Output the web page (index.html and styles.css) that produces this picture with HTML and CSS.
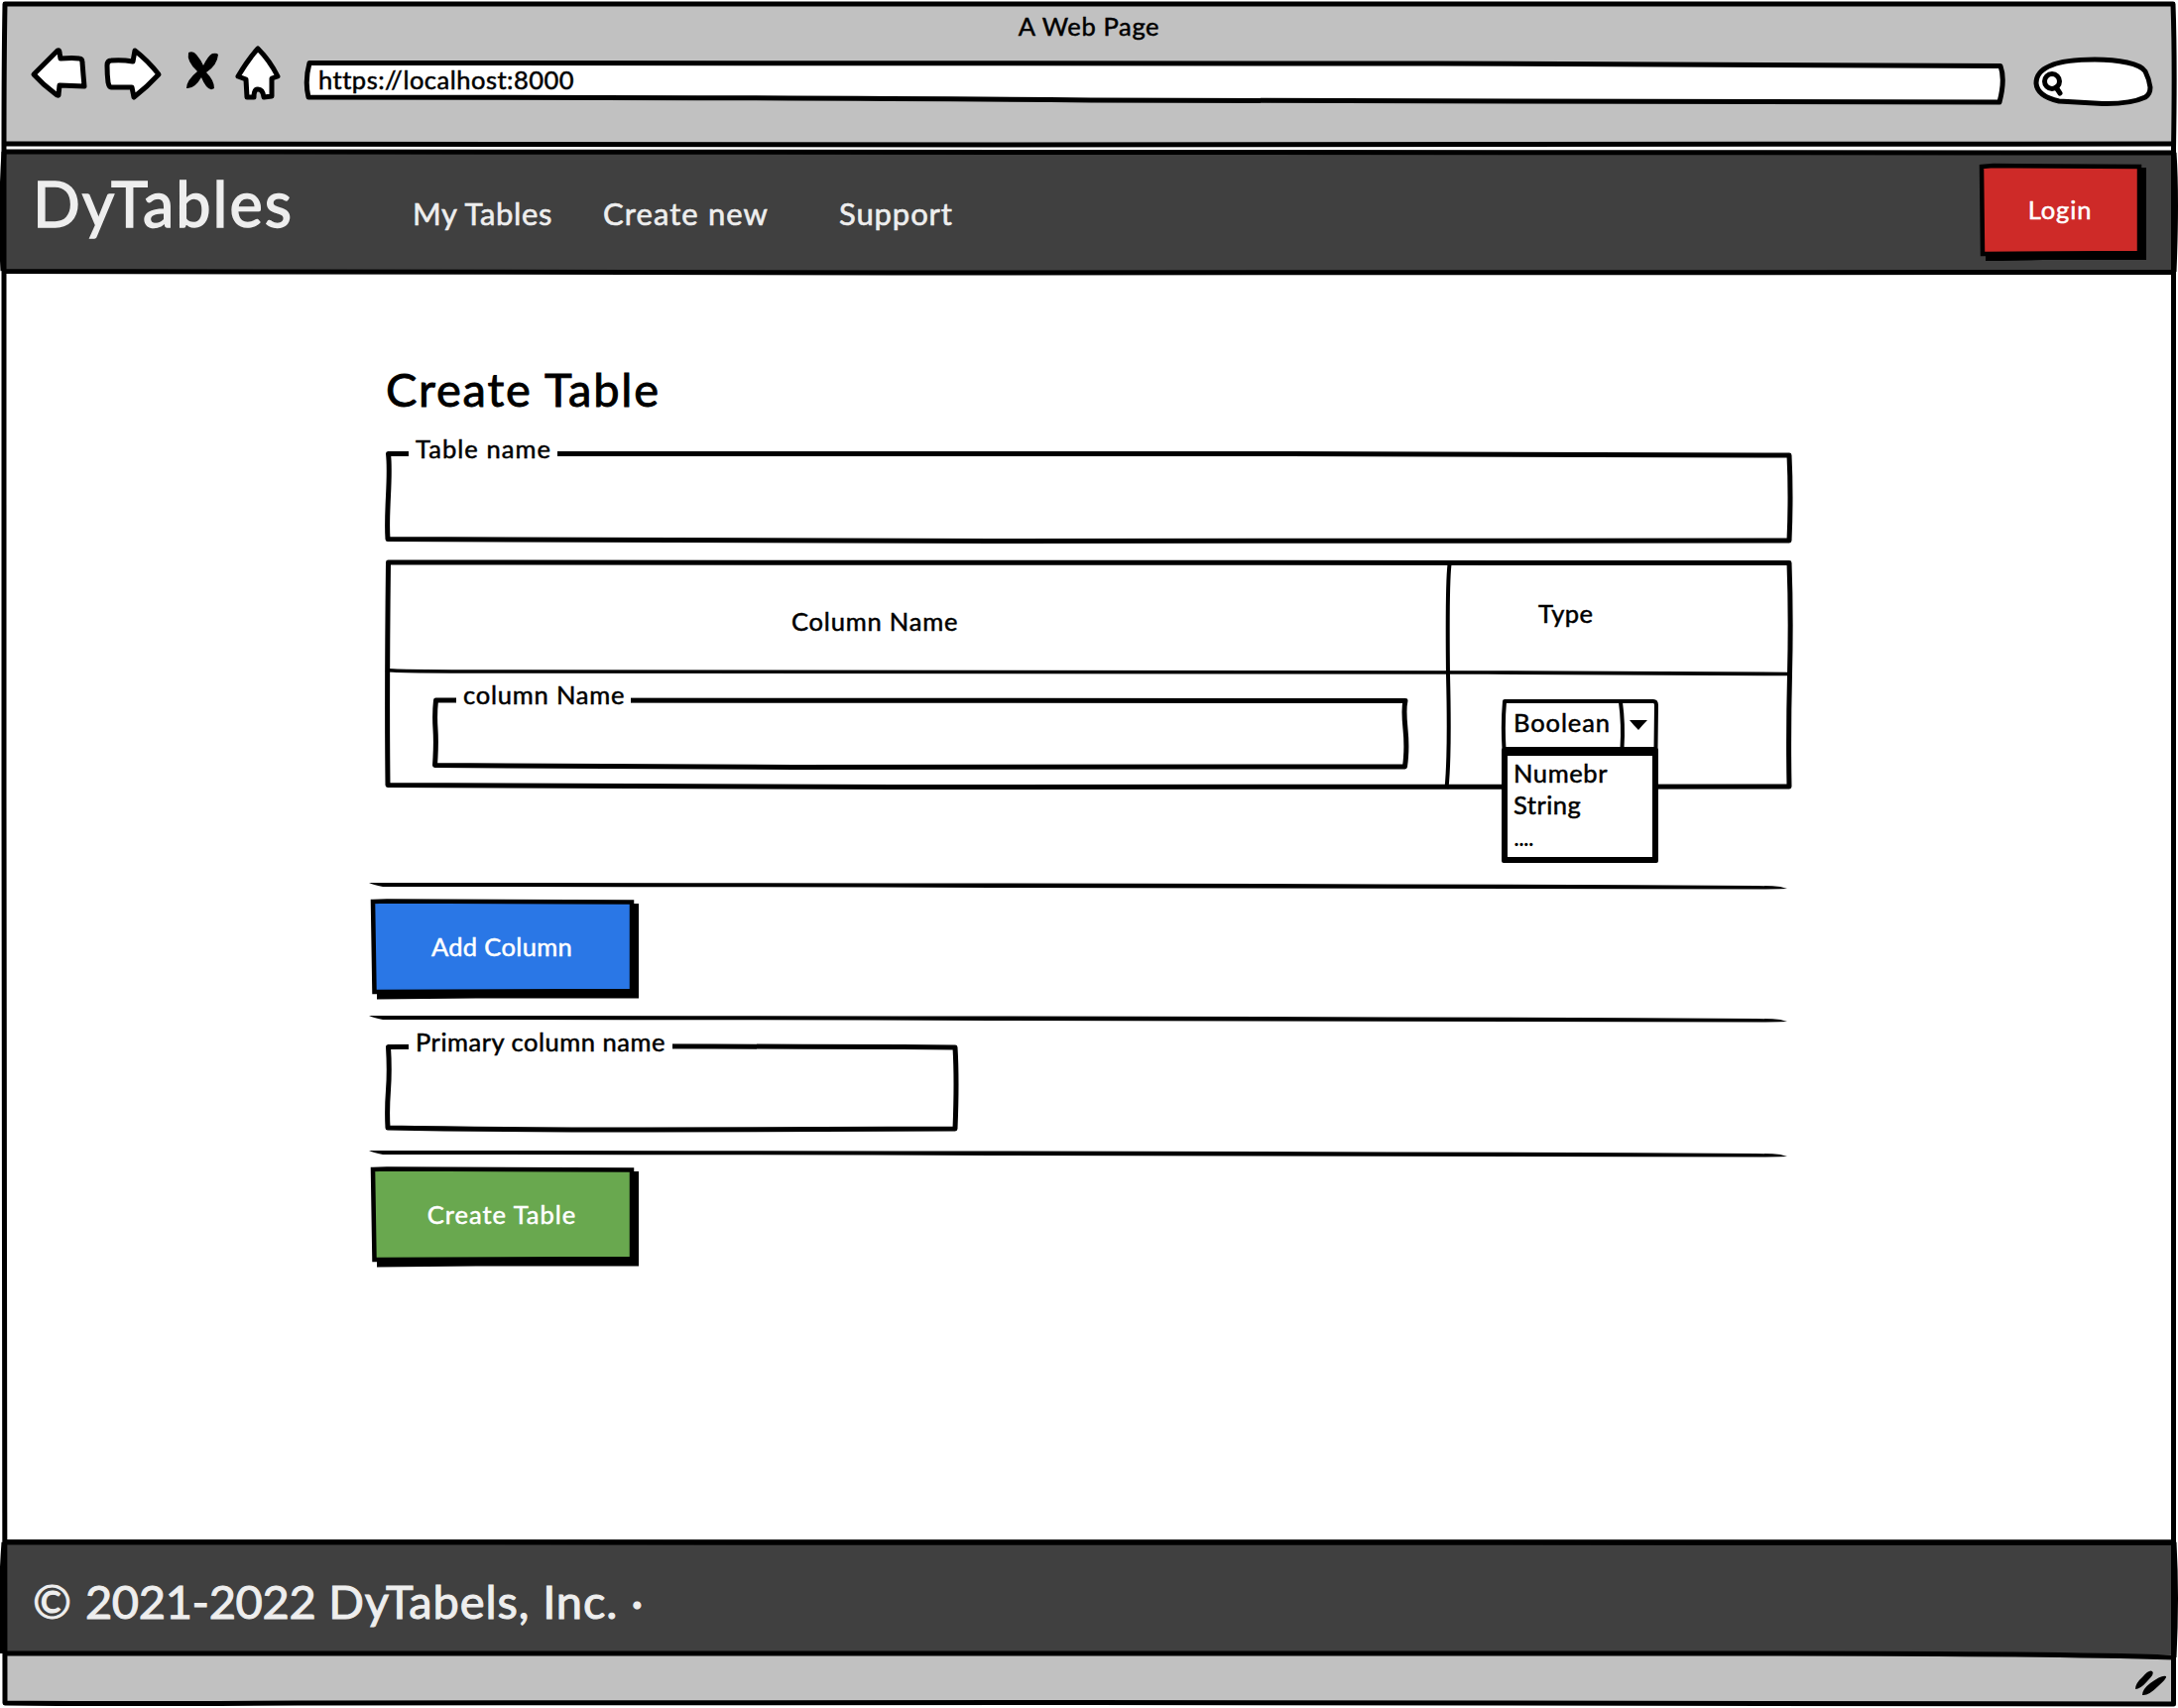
FILE: index.html
```
<!DOCTYPE html>
<html lang="en">
<head>
<meta charset="utf-8">
<title>A Web Page</title>
<link rel="stylesheet" href="styles.css">
</head>
<body>
<div class="window">
  <header class="chrome">
    <div class="chrome-title"><span class="t-title">A Web Page</span></div>
    <div class="toolbar">
      <svg class="tool tool-back" viewBox="28 52 76 60"><path d="M34 75L58 51Q60 50 60 53L61 59Q74 58 80 59Q83 59 83 63Q84 76 85 87L60 86L59 96Q58 97 55 94Q43 85 34 75Z"/></svg>
      <svg class="tool tool-forward" viewBox="104 52 80 60"><path d="M108 66Q108 61 112 61Q123 60 134 62L136 51Q149 61 160 75Q149 87 135 98L133 88L112 88Q110 88 109 83Q108 75 108 66Z"/></svg>
      <svg class="tool tool-stop" viewBox="184 52 52 60"><path class="solid" d="M190 53Q195 51 198 55Q203 61 205 66Q210 56 214 54Q219 53 220 55Q219 66 208 73Q216 81 216 89Q212 92 208 87Q205 83 203 78Q196 90 188 89Q188 81 199 72Q188 62 190 53Z"/></svg>
      <svg class="tool tool-home" viewBox="236 52 68 60"><path d="M260 49Q250 60 240 77L248 80L249 98L256 98Q256 90 260 90Q265 90 266 98L274 97L274 79L280 77Q272 61 260 49Z"/></svg>
      <div class="url">
        <svg class="sketch" viewBox="304 52 1720 60"><path class="paper" d="M312 63.5Q1000 62 1450 64Q1750 66 2017 66.5Q2022 80 2016 103Q1500 103 1100 101Q800 98 311 98Q307 82 312 63.5Z"/></svg>
        <span class="t-url">https://localhost:8000</span>
      </div>
      <svg class="tool tool-search" viewBox="2024 52 172 60"><path d="M2053 84C2053 66 2078 60 2112 60C2136 60 2158 64 2163 72Q2167 80 2168 88Q2168 95 2163 98Q2148 105 2120 104.500Q2095 103 2076 102Q2054 97 2053 84Z"/><circle cx="2069" cy="82" r="7.500"/><path d="M2073 88L2077 94"/></svg>
    </div>
  </header>
  <nav class="nav">
    <span class="brand t-brand">DyTables</span>
    <span class="link link-tables">My Tables</span>
    <span class="link link-new">Create new</span>
    <span class="link link-support">Support</span>
    <button class="btn btn-login">
      <svg class="sketch" viewBox="1996 165 168 98"><path class="shadow" d="M2002 169H2164V262L2060 262Q2030 263 2002 263Z"/><path class="fill-red" d="M1998 168L2010 167L2157 168L2157 255L1999 256Z"/></svg>
      <span class="t-login">Login</span>
    </button>
    <svg class="sketch" viewBox="0 150 2196 127"><path class="line" d="M3 153Q1100 152 2192 154M2192 154Q2195 200 2192 274M2192 274.500Q1500 275 900 275Q400 274 3 273.500M3 273Q0 220 4 153"/></svg>
  </nav>
  <main class="page">
    <h1><span class="t-h1">Create Table</span></h1>
    <div class="field field-table">
      <svg class="sketch" viewBox="389 455 1418 92"><path class="line" d="M391.500 457.500Q900 457 1300 457.500T1804 459Q1806 500 1804 545Q1300 546 1000 545.500Q700 545 391 543.500Q390 530 391.500 500T391.500 457.500Z"/></svg>
      <label class="label-table"><span class="t-tname">Table name</span></label>
    </div>
    <div class="table">
      <svg class="sketch" viewBox="389 564 1418 231"><path class="line" d="M391.500 567Q1000 566.500 1804 567.500Q1806 620 1804.500 680T1804 793Q1200 794 900 793.500T391 791.500Q390 700 391.500 567Z"/><path class="line thin" d="M1461.500 569Q1459 590 1460 680Q1462 760 1458.500 795"/><path class="row-line" d="M389 675.500Q400 677 500 677L1500 678L1807 679.500"/></svg>
      <div class="cell head-name"><span class="t-cname">Column Name</span></div>
      <div class="cell head-type"><span class="t-type">Type</span></div>
      <div class="cell cell-name">
        <div class="field field-column">
          <svg class="sketch" viewBox="437 703 982 72"><path class="line" d="M439.500 706Q900 705 1417 706.500Q1415 715 1417 735T1416.500 773Q1000 774 800 773.500T438.500 771.500Q440 750 439 735T439.500 706Z"/></svg>
          <label class="label-column"><span class="t-lcol">column Name</span></label>
        </div>
      </div>
      <div class="cell cell-type">
        <div class="combo">
          <svg class="sketch" viewBox="1514 705 158 50"><path class="paper thin" d="M1517 707H1667Q1670 707 1670 711L1669.500 755H1516.500Q1515 730 1517 707Z"/><path class="line thin" d="M1634 708Q1637 730 1635.500 754"/><path class="solid" d="M1643 726H1661Q1656 731 1652 736Q1647 731 1643 726Z"/></svg>
          <span class="t-bool">Boolean</span>
          <ul class="options">
            <li><span class="t-num">Numebr</span></li>
            <li><span class="t-str">String</span></li>
            <li><span class="t-dots">....</span></li>
          </ul>
        </div>
      </div>
    </div>
    <svg class="rule rule-1" viewBox="372 890 1430 8"><path d="M372 891Q376 893 386 895Q700 895 1000 896L1780 897.500Q1796 897 1802 897L1795 895Q1785 894 1770 894Q1400 892 1000 891.500Q600 891 372 891Z"/></svg>
    <button class="btn btn-add">
      <svg class="sketch" viewBox="374 907 270 100"><path class="shadow" d="M380 911H644V1006.500H480L380 1007.500Z"/><path class="fill-blue" d="M376 909L390 908.500L637 909.500L637 999L377.500 1000Z"/></svg>
      <span class="t-add">Add Column</span>
    </button>
    <svg class="rule rule-2" viewBox="372 890 1430 8"><path d="M372 891Q376 893 386 895Q700 895 1000 896L1780 897.500Q1796 897 1802 897L1795 895Q1785 894 1770 894Q1400 892 1000 891.500Q600 891 372 891Z"/></svg>
    <div class="field field-primary">
      <svg class="sketch" viewBox="389 1054 577 87"><path class="line" d="M391.500 1056.500Q600 1055 963 1057Q965 1090 963 1139Q800 1140 650 1140T391 1138Q390 1120 391.500 1100T391.500 1056.500Z"/></svg>
      <label class="label-primary"><span class="t-lprim">Primary column name</span></label>
    </div>
    <svg class="rule rule-3" viewBox="372 890 1430 8"><path d="M372 891Q376 893 386 895Q700 895 1000 896L1780 897.500Q1796 897 1802 897L1795 895Q1785 894 1770 894Q1400 892 1000 891.500Q600 891 372 891Z"/></svg>
    <button class="btn btn-create">
      <svg class="sketch" viewBox="374 907 270 100"><path class="shadow" d="M380 911H644V1006.500H480L380 1007.500Z"/><path class="fill-green" d="M376 909L390 908.500L637 909.500L637 999L377.500 1000Z"/></svg>
      <span class="t-create">Create Table</span>
    </button>
  </main>
  <footer class="footer"><span class="t-foot">© <span class="years">2021-2022</span> DyTabels, Inc. ·</span>
    <svg class="sketch" viewBox="0 1552 2196 116"><path class="line" d="M3 1555Q1100 1554 2192 1555.500M2192 1555Q2195 1610 2192 1671M2192 1671Q2050 1667 1800 1667Q900 1669 3 1667M2 1667Q0 1610 4 1555"/></svg>
  </footer>
  <div class="status">
    <svg class="grip" viewBox="2148 1680 40 32"><path d="M2153 1703Q2153 1697 2160 1691Q2167 1683 2170 1685Q2173 1687 2165 1695Q2158 1703 2153 1703ZM2160 1709Q2160 1703 2168 1697Q2180 1688 2184 1690Q2185 1692 2176 1700Q2166 1710 2160 1709Z"/></svg>
  </div>
  <svg class="sketch frame" viewBox="0 0 2196 1722"><path class="line" d="M5 4H2191Q2193 60 2191.500 150V1718Q1600 1717 1100 1716.500Q500 1716 300 1717T5 1717Q3 1200 4 800T4 150Q4 60 5 4Z"/><path class="line" d="M5 145Q400 147 1000 146T2191 145"/></svg>
</div>
</body>
</html>
```
FILE: styles.css
```
* { box-sizing: border-box; }
body {
  margin: 0;
  background: #fff;
  color: #000;
  font: 25.5px/30px Lato, "Open Sans", sans-serif;
  -webkit-text-stroke: 0.5px currentColor;
}
span, li, label { white-space: nowrap; }
svg { overflow: visible; display: block; }
.window {
  position: relative;
  width: 2196px;
  height: 1722px;
  display: flex;
  flex-direction: column;
}
.sketch { position: absolute; inset: 0; width: 100%; height: 100%; pointer-events: none; }
.sketch ~ span, .sketch ~ label { position: relative; }
.line { fill: none; stroke: #000; stroke-width: 5; stroke-linejoin: round; }
.paper { fill: #fff; stroke: #000; stroke-width: 5; stroke-linejoin: round; }
.thin { stroke-width: 4; }
.row-line { fill: none; stroke: #000; stroke-width: 3.6; }
.solid { fill: #000; stroke: none; }
.shadow { fill: #000; }

.chrome { height: 148px; margin: 3px 4px 0; background: linear-gradient(#c1c1c1 142px, #fff 142px); }
.chrome-title { height: 49px; line-height: 46px; text-align: center; }
.toolbar { display: flex; height: 60px; margin-left: 24px; margin-right: -4px; }
.tool { height: 60px; flex: none; fill: #fff; stroke: #000; stroke-width: 5; stroke-linejoin: round; stroke-linecap: round; }
.tool .solid { fill: #000; stroke: none; }
.tool-back { width: 76px; }
.tool-forward { width: 80px; }
.tool-stop { width: 52px; }
.tool-home { width: 68px; }
.tool-search { width: 172px; }
.url { position: relative; flex: 1; padding: 13px 0 0 17px; }

.nav { position: relative; height: 127px; margin-top: -1px; background: linear-gradient(#404040, #404040) 4px 3px / 2188px 122px no-repeat; color: #eee; display: flex; flex: none; }
.nav > .sketch { z-index: 1; }
.brand { width: 416px; padding-left: 33px; font-size: 63px; line-height: 70px; margin-top: 20px; -webkit-text-stroke-width: 1.4px; }
.link { font-size: 31px; line-height: 40px; margin-top: 45px; -webkit-text-stroke-width: 0.6px; }
.link-tables { width: 192px; }
.link-new { width: 238px; }

.btn { position: relative; display: block; border: 0; background: none; font: inherit; color: #fff; text-align: center; -webkit-text-stroke: inherit; }
.fill-red, .fill-blue, .fill-green { stroke: #000; stroke-width: 4.5; }
.fill-red { fill: #ce2a28; }
.fill-blue { fill: #2a77e6; }
.fill-green { fill: #69a84f; }
.btn-login { width: 168px; height: 98px; margin: 15px 32px 0 auto; padding: 0 6px 6px 0; }

.page { flex: none; height: 1275px; padding: 85px 390px 0 372px; }
h1 { margin: 0 0 33px 17px; height: 60px; font-size: 47px; line-height: 60px; font-weight: 400; -webkit-text-stroke-width: 0.9px; }
.field { position: relative; display: flex; align-items: flex-start; }
.field label { background: #fff; padding-left: 7px; margin: -18px 0 0 23px; height: 30px; }
.field-table { margin-left: 17px; width: 1418px; height: 92px; }
.label-table { width: 150px; }
.table { position: relative; display: grid; grid-template: 113px 118px / 1071px 347px; margin: 17px 0 0 17px; width: 1418px; }
.head-name { padding: 47px 0 0 409px; }
.head-type { padding: 39px 0 0 91px; }
.cell-name { padding: 26px 0 0 48px; }
.cell-type { padding: 28px 0 0 54px; }
.field-column { width: 982px; height: 72px; }
.field .label-column { width: 176px; }
.combo { position: relative; width: 158px; height: 50px; padding: 8px 0 0 12px; }
.options { position: absolute; left: 0; top: 49px; width: 158px; height: 116px; margin: 0; padding: 1px 0 0 6px; list-style: none; background: #fff; border: 6px solid #000; border-top-width: 8px; border-radius: 2px; line-height: 32px; }
.rule { width: 1430px; height: 8px; fill: #000; }
.rule-1 { margin-top: 94px; }
.rule-2 { margin-top: 16px; }
.rule-3 { margin-top: 19px; }
.btn-add, .btn-create { width: 270px; height: 100px; margin: 10px 0 0 2px; padding: 0 6px 7px 0; }
.field-primary { margin: 22px 0 0 17px; width: 577px; height: 87px; }
.field .label-primary { width: 266px; }

.footer { position: relative; flex: none; height: 116px; padding: 34px 0 0 33px; background: linear-gradient(#404040, #404040) 4px 0 / 2188px 100% no-repeat; color: #eee; font-size: 47px; line-height: 56px; -webkit-text-stroke-width: 1px; }
.status { flex: 1; margin: 0 4px 5px; background: #c1c1c1; display: flex; justify-content: flex-end; padding: 12px 4px 0 0; }
.grip { width: 40px; height: 32px; }

.t-title { letter-spacing: 0.65px; }
.t-url { letter-spacing: 0.5px; }
.t-brand { letter-spacing: 2px; }
.link-tables { letter-spacing: 0.65px; }
.link-new { letter-spacing: 1.1px; }
.link-support { letter-spacing: 0.9px; }
.t-login { letter-spacing: 0.9px; }
.t-h1 { letter-spacing: 1.78px; }
.t-tname { letter-spacing: 1.05px; }
.t-cname { letter-spacing: 0.8px; }
.t-type { letter-spacing: 0.4px; }
.t-lcol { letter-spacing: 0.8px; }
.t-bool { letter-spacing: 0.9px; }
.t-num { letter-spacing: 0.6px; }
.t-str { letter-spacing: 0.5px; }
.t-dots { letter-spacing: -1.1px; -webkit-text-stroke-width: 0; }
.t-add { letter-spacing: 0.35px; }
.t-create { letter-spacing: 1px; }
.t-lprim { letter-spacing: 0.52px; }
.t-foot { letter-spacing: 0.9px; }
.years { letter-spacing: -0.35px; }
```
